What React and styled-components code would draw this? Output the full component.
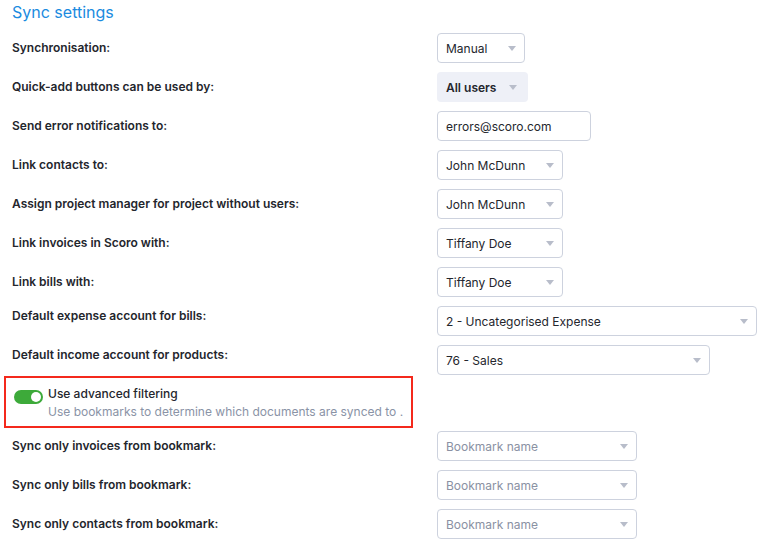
import React from 'react';
import styled, { createGlobalStyle } from 'styled-components';

const GlobalStyle = createGlobalStyle`
    body {
        margin: 0;
        background: #ffffff;
        font-family: Inter, "Noto Sans", "Liberation Sans", sans-serif;
        color: #24262d;
    }
`;

const Page = styled.div`
    padding: 0 12px;
    width: 763px;
    box-sizing: border-box;
`;

const Title = styled.h2`
    margin: 0 0 9px;
    font-size: 16px;
    line-height: 24px;
    font-weight: 400;
    color: #1b8be0;
`;

const Rows = styled.div`
    display: flex;
    flex-direction: column;
    gap: 9px;
`;

const Row = styled.div`
    display: grid;
    grid-template-columns: 425px 1fr;
    align-items: ${p => (p.top ? 'start' : 'center')};
`;

const Label = styled.div`
    font-size: 12px;
    font-weight: 600;
    line-height: 16px;
    color: #24262d;
    padding-top: ${p => (p.top ? '2px' : '0')};
`;

const SelectBox = styled.div`
    width: ${p => p.width}px;
    height: 30px;
    box-sizing: border-box;
    display: flex;
    align-items: center;
    justify-content: space-between;
    padding: 0 ${p => (p.filled ? '10px' : '8px')} 0 8px;
    border-radius: 4px;
    border: 1px solid ${p => (p.filled ? 'transparent' : '#cdd2de')};
    background: ${p => (p.filled ? '#eef0f7' : '#ffffff')};
    font-size: 12px;
    font-weight: ${p => (p.filled ? 600 : 400)};
    color: ${p => (p.placeholder ? '#8a91a3' : '#24262d')};
`;

const Caret = styled.span`
    width: 0;
    height: 0;
    border-left: 4px solid transparent;
    border-right: 4px solid transparent;
    border-top: 5px solid #b8bdca;
`;

const Input = styled.div`
    width: ${p => p.width}px;
    height: 30px;
    box-sizing: border-box;
    display: flex;
    align-items: center;
    padding: 0 8px;
    border-radius: 4px;
    border: 1px solid #cdd2de;
    font-size: 12px;
    color: #24262d;
`;

const FilterBox = styled.div`
    margin: 1px 0 3px -8px;
    width: 409px;
    height: 52px;
    box-sizing: border-box;
    border: 2px solid #f4291c;
    padding: 8px 8px 0;
    display: flex;
    align-items: flex-start;
    gap: 5px;
`;

const Switch = styled.div`
    margin-top: 4px;
    width: 29px;
    height: 14px;
    border-radius: 7px;
    background: #3daa3a;
    position: relative;
    flex-shrink: 0;

    &::after {
        content: '';
        position: absolute;
        right: 2px;
        top: 2px;
        width: 10px;
        height: 10px;
        border-radius: 50%;
        background: #ffffff;
    }
`;

const FilterText = styled.div`
    display: flex;
    flex-direction: column;
    gap: 2px;
    white-space: nowrap;
`;

const FilterTitle = styled.div`
    font-size: 12px;
    font-weight: 500;
    line-height: 16px;
    color: #24262d;
`;

const FilterDesc = styled.div`
    font-size: 12px;
    line-height: 16px;
    color: #8a93a6;
`;

const Select = ({ value, width, filled, placeholder }) => (
    <SelectBox width={width} filled={filled} placeholder={placeholder}>
        <span>{value}</span>
        <Caret />
    </SelectBox>
);

const topRows = [
    { label: 'Synchronisation:', value: 'Manual', width: 88 },
    { label: 'Quick-add buttons can be used by:', value: 'All users', width: 91, filled: true },
    { label: 'Send error notifications to:', value: 'errors@scoro.com', width: 154, input: true },
    { label: 'Link contacts to:', value: 'John McDunn', width: 126 },
    { label: 'Assign project manager for project without users:', value: 'John McDunn', width: 126 },
    { label: 'Link invoices in Scoro with:', value: 'Tiffany Doe', width: 126 },
    { label: 'Link bills with:', value: 'Tiffany Doe', width: 126 },
    { label: 'Default expense account for bills:', value: '2 - Uncategorised Expense', width: 320, top: true },
    { label: 'Default income account for products:', value: '76 - Sales', width: 273, top: true }
];

const bookmarkRows = [
    'Sync only invoices from bookmark:',
    'Sync only bills from bookmark:',
    'Sync only contacts from bookmark:'
];

export default function App() {
    return <Page>
        <GlobalStyle />
        <Title>Sync settings</Title>
        <Rows>
            {
                topRows.map(row => {
                    return <Row key={row.label} top={row.top}>
                        <Label top={row.top}>{row.label}</Label>
                        {row.input
                            ? <Input width={row.width}>{row.value}</Input>
                            : <Select value={row.value} width={row.width} filled={row.filled} />}
                    </Row>
                })
            }
        </Rows>
        <FilterBox>
            <Switch />
            <FilterText>
                <FilterTitle>Use advanced filtering</FilterTitle>
                <FilterDesc>Use bookmarks to determine which documents are synced to .</FilterDesc>
            </FilterText>
        </FilterBox>
        <Rows>
            {
                bookmarkRows.map(label => {
                    return <Row key={label}>
                        <Label>{label}</Label>
                        <Select value="Bookmark name" width={200} placeholder />
                    </Row>
                })
            }
        </Rows>
    </Page>;
}
